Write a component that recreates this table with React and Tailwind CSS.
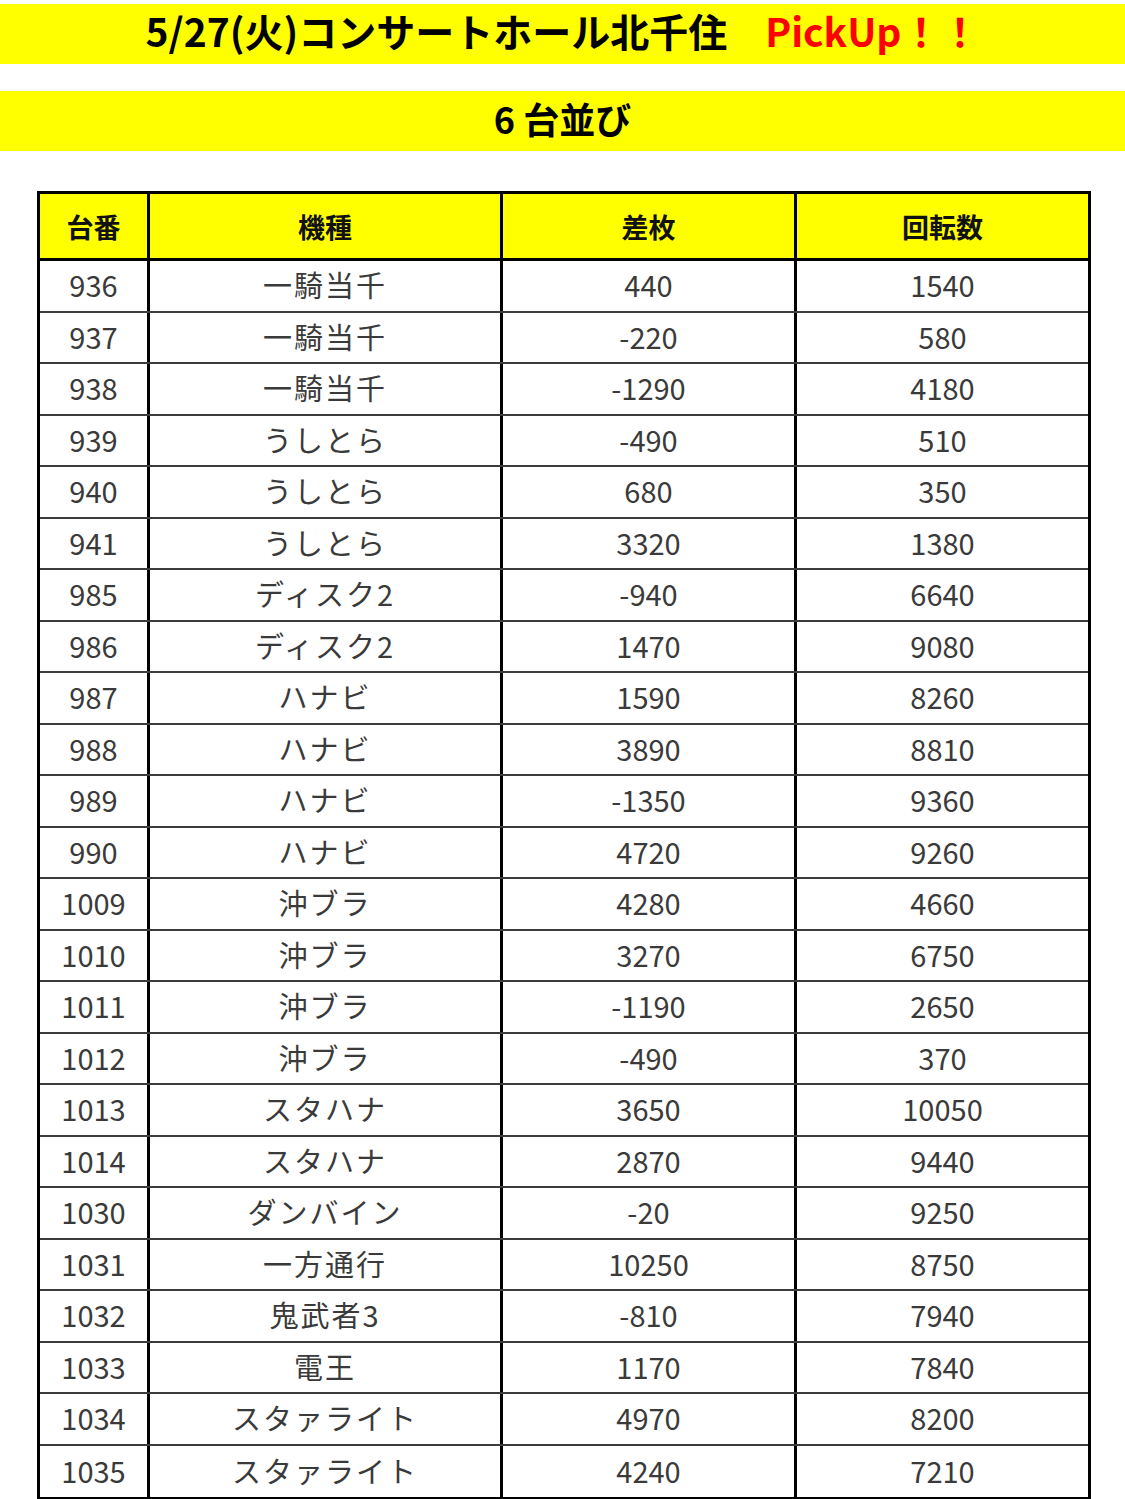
import React from 'react';

const ROWS = [
  ['936', '一騎当千', '440', '1540'],
  ['937', '一騎当千', '-220', '580'],
  ['938', '一騎当千', '-1290', '4180'],
  ['939', 'うしとら', '-490', '510'],
  ['940', 'うしとら', '680', '350'],
  ['941', 'うしとら', '3320', '1380'],
  ['985', 'ディスク2', '-940', '6640'],
  ['986', 'ディスク2', '1470', '9080'],
  ['987', 'ハナビ', '1590', '8260'],
  ['988', 'ハナビ', '3890', '8810'],
  ['989', 'ハナビ', '-1350', '9360'],
  ['990', 'ハナビ', '4720', '9260'],
  ['1009', '沖ブラ', '4280', '4660'],
  ['1010', '沖ブラ', '3270', '6750'],
  ['1011', '沖ブラ', '-1190', '2650'],
  ['1012', '沖ブラ', '-490', '370'],
  ['1013', 'スタハナ', '3650', '10050'],
  ['1014', 'スタハナ', '2870', '9440'],
  ['1030', 'ダンバイン', '-20', '9250'],
  ['1031', '一方通行', '10250', '8750'],
  ['1032', '鬼武者3', '-810', '7940'],
  ['1033', '電王', '1170', '7840'],
  ['1034', 'スタァライト', '4970', '8200'],
  ['1035', 'スタァライト', '4240', '7210'],
];

const HEADERS = ['台番', '機種', '差枚', '回転数'];

const font = { fontFamily: '"Noto Sans CJK JP", "Noto Sans", sans-serif' };

export default function App() {
  return (
    <div className="w-[1125px] bg-white pt-[4px]" style={font}>
      <div className="flex h-[60px] items-center justify-center bg-[#ffff00] pb-[8px]">
        <h1 className="text-[39px] font-bold leading-none text-black">
          5/27(火)コンサートホール北千住
          <span className="ml-[38px] text-[#ff0000]">PickUp！！</span>
        </h1>
      </div>

      <div className="mt-[27px] flex h-[60px] items-center justify-center bg-[#ffff00] pb-[6px]">
        <h2 className="text-[36px] font-bold leading-none text-black">6 台並び</h2>
      </div>

      <div className="ml-[37px] mt-[40px] w-[1054px] border-[3px] border-black">
        <div className="grid h-[67px] grid-cols-[110px_353px_294px_291px] border-b-[3px] border-black bg-[#ffff00]">
          {HEADERS.map((h, i) => (
            <div
              key={h}
              className={`flex items-center justify-center pt-[2px] text-[27px] font-bold text-[#111] ${
                i < 3 ? 'border-r-[3px] border-black' : ''
              }`}
            >
              {h}
            </div>
          ))}
        </div>

        {ROWS.map((row, r) => (
          <div
            key={row[0]}
            className={`grid h-[51.5px] grid-cols-[110px_353px_294px_291px] ${
              r < ROWS.length - 1 ? 'border-b-2 border-[#3c3c3c]' : ''
            }`}
          >
            {row.map((cell, i) => (
              <div
                key={i}
                className={`flex items-center justify-center pb-[2px] text-[29px] leading-none text-[#3a3a3a] ${
                  i < 3 ? 'border-r-[3px] border-black' : ''
                } ${i === 1 ? 'tracking-[2px]' : ''}`}
              >
                {cell}
              </div>
            ))}
          </div>
        ))}
      </div>
    </div>
  );
}
